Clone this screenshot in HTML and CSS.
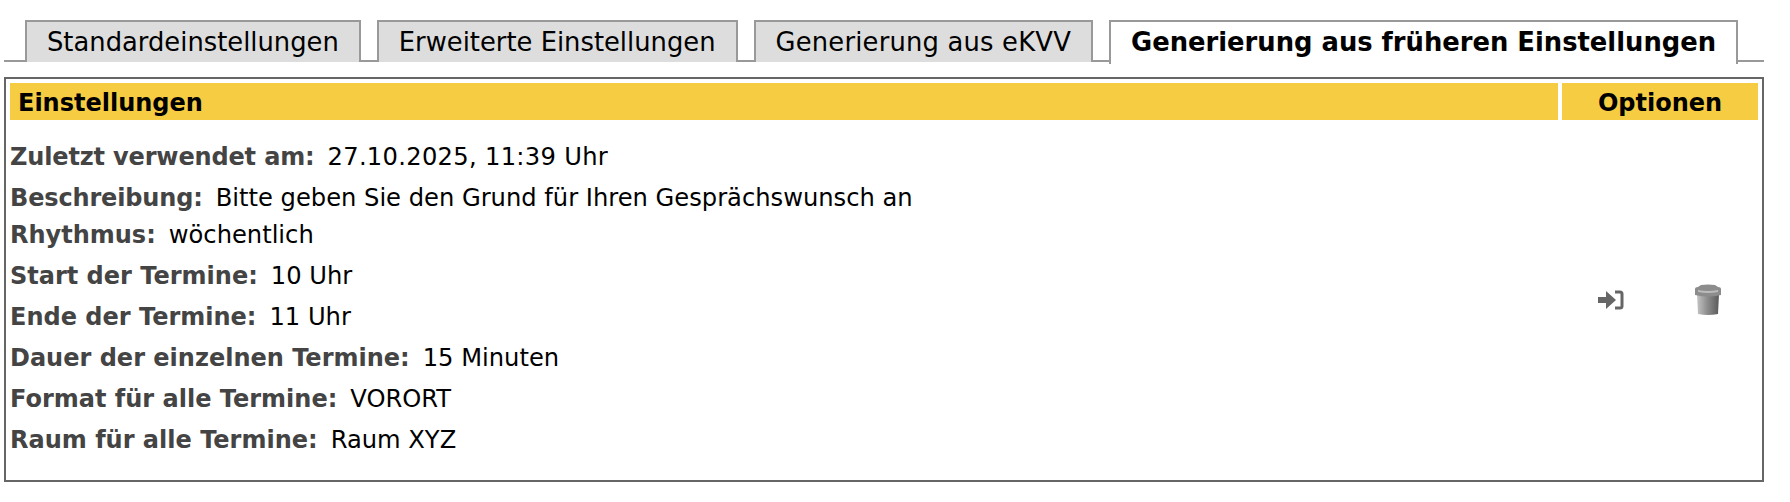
FILE: index.html
```html
<!DOCTYPE html>
<html lang="de">
<head>
  <meta charset="UTF-8" />
  <title>Generierung aus früheren Einstellungen</title>
  <link rel="stylesheet" href="styles.css">
</head>
<body>
  <div class="tabs">
    <a class="tab">Standardeinstellungen</a>
    <a class="tab">Erweiterte Einstellungen</a>
    <a class="tab wide">Generierung aus eKVV</a>
    <a class="tab active">Generierung aus früheren Einstellungen</a>
  </div>

  <div class="box">
    <div class="head">
      <div class="head-main">Einstellungen</div>
      <div class="head-opts">Optionen</div>
    </div>
    <div class="entry">
      <div class="details">
        <div class="row first"><b>Zuletzt verwendet am:</b><span>27.10.2025, 11:39 Uhr</span></div>
        <div class="row narrow"><b>Beschreibung:</b><span>Bitte geben Sie den Grund für Ihren Gesprächswunsch an</span></div>
        <div class="row tight"><b>Rhythmus:</b><span>wöchentlich</span></div>
        <div class="row"><b>Start der Termine:</b><span>10 Uhr</span></div>
        <div class="row"><b>Ende der Termine:</b><span>11 Uhr</span></div>
        <div class="row"><b>Dauer der einzelnen Termine:</b><span>15 Minuten</span></div>
        <div class="row"><b>Format für alle Termine:</b><span>VORORT</span></div>
        <div class="row"><b>Raum für alle Termine:</b><span>Raum XYZ</span></div>
      </div>
      <div class="options">
        <svg class="icon-use" width="26" height="20" viewBox="0 0 26 20">
          <path fill="#666" d="M0 7h8V1l10 9-10 9v-6H0z"/>
          <path fill="none" stroke="#666" stroke-width="3" d="M17 2h5a2 2 0 0 1 2 2v12a2 2 0 0 1-2 2h-5"/>
        </svg>
        <svg class="icon-trash" width="28" height="32" viewBox="0 0 28 32">
          <defs>
            <linearGradient id="can" x1="0" x2="1" y1="0" y2="0">
              <stop offset="0" stop-color="#c4c4c4"/>
              <stop offset="0.45" stop-color="#8f8f8f"/>
              <stop offset="1" stop-color="#5a5a5a"/>
            </linearGradient>
          </defs>
          <path fill="url(#can)" d="M3 10h22l-1 20q-10 2-20 0z"/>
          <path fill="#8c8c8c" d="M1 5q0-2 3-2l3-2q7-1 14 0l3 2q3 0 3 2v6q-13 3-26 0z"/>
          <path fill="#bbb" d="M4 6q10 2 20 0v2q-10 2-20 0z"/>
        </svg>
      </div>
    </div>
  </div>
</body>
</html>
```

FILE: styles.css
```css
body {
  margin: 0;
  padding: 20px 26px 0 4px;
  background: #fff;
  font-family: "DejaVu Sans", Verdana, sans-serif;
  font-size: 24.2px;
  color: #000;
}

.tabs {
  display: flex;
  gap: 16px;
  height: 40px;
  padding-left: 21px;
  border-bottom: 2px solid #999;
}

.tab {
  height: 40px;
  padding: 0 20px;
  font-size: 25.8px;
  line-height: 40px;
  white-space: nowrap;
  background: #ddd;
  border: 2px solid #999;
  border-bottom: 0;
}

.tab.wide {
  letter-spacing: 0.2px;
}

.tab.active {
  height: 42px;
  background: #fff;
  font-weight: bold;
}

.box {
  margin-top: 15px;
  height: 393px;
  padding: 4px;
  border: 2px solid #666;
}

.head {
  display: flex;
  gap: 4px;
  height: 37px;
  font-size: 24px;
  line-height: 41px;
  font-weight: bold;
}

.head-main {
  flex: 1;
  padding-left: 8px;
  background: #f6cc43;
}

.head-opts {
  width: 196px;
  text-align: center;
  background: #f6cc43;
}

.entry {
  display: flex;
  align-items: center;
}

.details {
  flex: 1;
  padding-top: 22px;
}

.row {
  margin-top: 11px;
  line-height: 30px;
  height: 30px;
}

.row.first {
  margin-top: 0;
  letter-spacing: -0.15px;
}

.row.first span {
  letter-spacing: 0.3px;
}

.row.narrow b {
  letter-spacing: -0.15px;
}

.row.tight {
  margin-top: 7px;
}

.row b {
  margin-right: 13px;
  font-size: 24px;
  color: #444;
}

.options {
  display: flex;
  align-items: center;
  justify-content: space-between;
  width: 124px;
  margin-right: 36px;
  margin-top: 24px;
}
```
